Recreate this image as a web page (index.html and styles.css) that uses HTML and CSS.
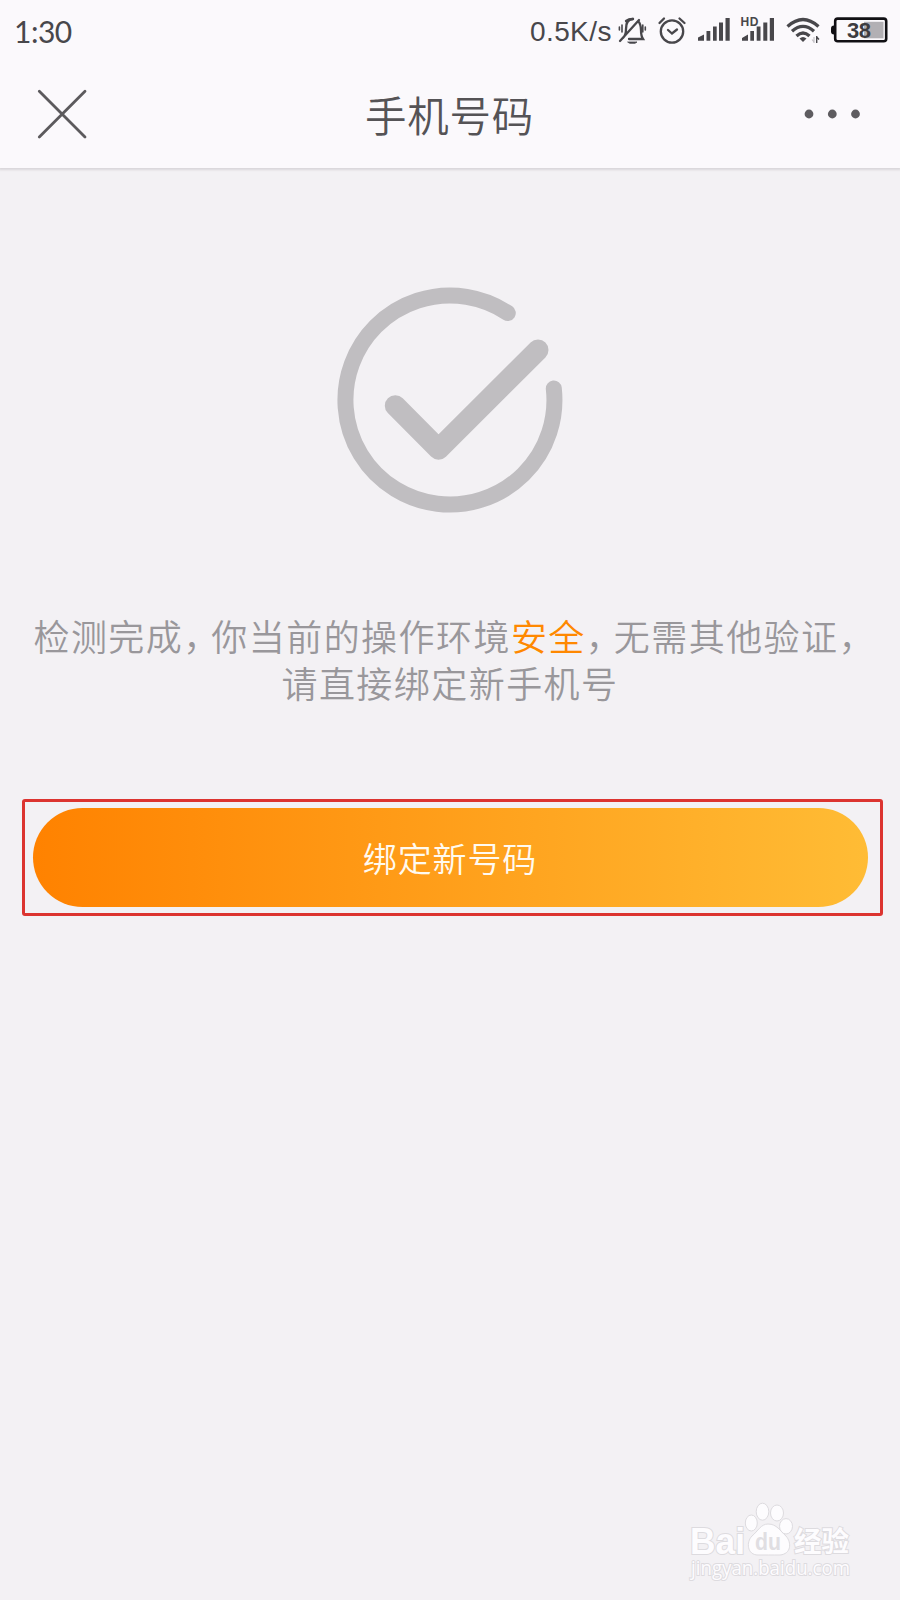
FILE: index.html
```html
<!DOCTYPE html>
<html lang="zh-CN">
<head>
<meta charset="utf-8">
<title>手机号码</title>
<link rel="stylesheet" href="styles.css">
</head>
<body>
<div class="screen">
  <header class="header">
    <div class="status">
      <span class="clock">1:30</span>
      <div class="status-right">
        <span class="speed">0.5K/s</span>
        <svg class="status-icons" width="284" height="60" viewBox="616 0 284 60" fill="none" stroke="#48474b" stroke-width="2.3" stroke-linecap="round">
          <g>
            <path d="M623 38Q626 35 626 29Q626 19 633 19M638 21Q641 24 641 30Q641 36 643 39H629M639 20L620 41"/>
            <path d="M626 21Q629 18.8 633 19" />
            <path d="M628 42H637L635 43.3H630Z" fill="#48474b" stroke-width="0.8"/>
            <path d="M622 25V32M619.4 27V30M642.8 25V32M645.3 27V30" stroke-width="1.6"/>
          </g>
          <g>
            <circle cx="672" cy="31.5" r="11.2"/>
            <path d="M668 30L672 33.5L677 29.5M659.5 23L664 18.5M679.5 18.5L684.5 23"/>
          </g>
          <g fill="#48474b" stroke="none">
            <path d="M698 40.8V37.5L704 34.5V40.8ZM706.5 31H710.3V40.8H706.5ZM713 26.5H716.7V40.8H713ZM719 22.5H723V40.8H719ZM725.5 18H729.7V40.8H725.5Z"/>
            <path d="M742 40.8V38L748 34.5V40.8ZM750.3 31H754V40.8H750.3ZM756.7 26.5H760.5V40.8H756.7ZM763.3 22.5H767.3V40.8H763.3ZM769.8 18H774V40.8H769.8Z"/>
            <text class="hd" x="740.5" y="26" textLength="18">HD</text>
          </g>
          <g stroke-width="3.3" stroke-linecap="butt">
            <path d="M787.5 26.5Q803 12.5 818.5 26.5M792 31.3Q803 21.5 814 31.3M796.5 36Q803 30 809.5 36"/>
            <path d="M799.5 38.5Q803 35.5 806.5 38.5L803 42Z" fill="#48474b" stroke="none"/>
            <path d="M816.7 36V43M816.7 37L819 39.5" stroke-width="1.4"/>
            <path d="M814 37V43M814 42L812 39.5" stroke="#c4c2c6" stroke-width="1.2"/>
          </g>
          <path d="M834 25.5Q831 25.5 831 28.5V31.5Q831 34.5 834 34.5Z" fill="#111014" stroke="none"/>
          <rect x="835.2" y="18.6" width="51" height="22.6" rx="2.5" stroke="#111014" stroke-width="2.6"/>
          <rect x="864" y="21.8" width="19.5" height="16.5" fill="#b2b0b4" stroke="none"/>
          <text class="charge" x="847" y="37.5" textLength="24">38</text>
        </svg>
      </div>
    </div>
    <div class="navbar">
      <svg width="50" height="50" viewBox="0 0 50 50" stroke="#5c5a5d" stroke-width="2.8" stroke-linecap="round"><path d="M2.3 2.3L48 48M48 2.3L2.3 48"/></svg>
      <h1 class="title">手机号码</h1>
      <svg width="58" height="10" viewBox="0 0 58 10" fill="#5e5c60"><circle cx="6" cy="5" r="4.4"/><circle cx="29.3" cy="5" r="4.4"/><circle cx="52.5" cy="5" r="4.4"/></svg>
    </div>
  </header>
  <main class="content">
    <svg class="check" width="226" height="226" viewBox="337 287 226 226" fill="none" stroke="#c0bec1" stroke-linecap="round" stroke-linejoin="round">
      <path d="M507.8 313A104.5 104.5 0 1 0 553.8 388.5" stroke-width="16"/>
      <path d="M395.3 405.7L438.5 449.2L538 350" stroke-width="21"/>
    </svg>
    <p class="message">检测完成<span class="comma">，</span>你当前的操作环境<span class="safe">安全</span><span class="comma">，</span>无需其他验证<span class="comma">，</span><br>请直接绑定新手机号</p>
    <div class="frame"><button class="bind">绑定新号码</button></div>
  </main>
  <footer class="watermark">
    <svg width="180" height="90" viewBox="680 1495 180 90" fill="#fdfcfe" stroke="#dddbdf" stroke-width="1">
      <ellipse cx="751.3" cy="1523" rx="6" ry="8"/>
      <ellipse cx="762.5" cy="1511.7" rx="6.3" ry="8.5"/>
      <ellipse cx="777" cy="1513" rx="6.5" ry="8"/>
      <ellipse cx="786" cy="1526.3" rx="6.5" ry="7.7"/>
      <path d="M768 1524C761 1524 758 1531 752 1536C746 1542 747 1555 758 1555C764 1555 773 1555 780 1555C791 1554 792 1543 786 1536C780 1531 777 1524 768 1524Z"/>
      <g paint-order="stroke" stroke-width="2">
        <text class="logo" x="690" y="1554" textLength="55" lengthAdjust="spacingAndGlyphs">Bai</text>
        <text class="logo-cn" x="794" y="1552" textLength="55" lengthAdjust="spacingAndGlyphs">经验</text>
        <text class="site" x="691" y="1575" textLength="159" lengthAdjust="spacingAndGlyphs">jingyan.baidu.com</text>
      </g>
      <text class="du" x="755" y="1550" textLength="26" lengthAdjust="spacingAndGlyphs">du</text>
    </svg>
  </footer>
</div>
</body>
</html>
```
FILE: styles.css
```css
* { box-sizing: border-box; }
body { margin: 0; background: #f3f1f4; font-family: "Noto Sans CJK SC", sans-serif; }
.screen { width: 900px; height: 1600px; display: flex; flex-direction: column; background: #f3f1f4; overflow: hidden; }
.header { height: 168px; background: #fbf9fc; box-shadow: 0 1px 2px 1px #d9d7da; }
.status { height: 60px; display: flex; justify-content: space-between; align-items: center; padding-left: 14px; }
.clock { font: 30px/36px Lato, sans-serif; color: #48474b; padding-top: 1px; letter-spacing: -0.5px; }
.status-right { display: flex; align-items: center; }
.speed { font: 28px/36px "Liberation Sans", sans-serif; color: #48474b; width: 86px; padding-top: 3px; letter-spacing: 0.4px; }
.status-icons { display: block; }
.hd { font: bold 12px "Liberation Sans", sans-serif; }
.charge { font: bold 22px "Liberation Sans", sans-serif; fill: #3d3c40; stroke: none; }
.navbar { height: 108px; display: flex; align-items: center; justify-content: space-between; padding: 0 39px 0 37px; }
.navbar svg { display: block; }
.title { margin: 0; padding-left: 9px; font-size: 41.5px; line-height: 60px; font-weight: 350; color: #555356; letter-spacing: 0.8px; }
.content { flex: 1; display: flex; flex-direction: column; align-items: center; padding-top: 119px; }
.check { display: block; flex: none; }
.message { margin: 99px 0 0; font-size: 36px; line-height: 47px; font-weight: 350; letter-spacing: 1.45px; color: #99979b; text-align: center; white-space: nowrap; }
.comma { letter-spacing: -8px; }
.safe { color: #ff8800; }
.frame { width: 861px; height: 117px; margin: 93px 0 0 4px; padding: 6px 12px 6px 8px; border: 3px solid #dc3430; border-radius: 3px; }
.bind { display: block; width: 835px; height: 99px; border: 0; border-radius: 50px; padding: 1px 0 0; background: linear-gradient(90deg, #ff8200, #ffbc35); color: #fffaf0; font: 350 34px/44px "Noto Sans CJK SC", sans-serif; letter-spacing: 0.9px; }
.watermark { display: flex; justify-content: flex-end; padding: 0 40px 15px 0; }
.watermark svg { display: block; overflow: visible; }
.logo { font: bold 36px "Liberation Sans", sans-serif; }
.logo-cn { font: bold 28px "Noto Sans CJK SC", sans-serif; }
.site { font: 20px "Open Sans", sans-serif; }
.du { font: bold 24px "Liberation Sans", sans-serif; fill: #e0dee2; stroke: none; }
```
